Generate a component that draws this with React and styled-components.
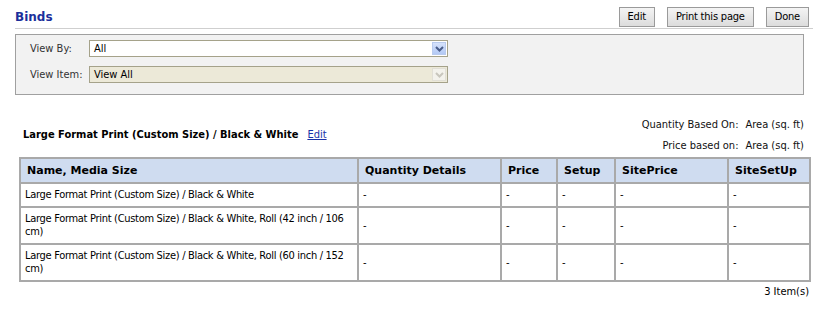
import React from "react";
import styled, { createGlobalStyle } from "styled-components";

const Global = createGlobalStyle`
  body {
    margin: 0;
    background: #fff;
    font-family: Tahoma, "DejaVu Sans Condensed", "DejaVu Sans", sans-serif;
    font-size: 11px;
    color: #000;
  }
`;

const Page = styled.div`
  padding: 6px 15px 0 15px;
  width: 798px;
`;

const TopBar = styled.div`
  display: flex;
  justify-content: space-between;
  align-items: center;
  height: 21px;
  padding-bottom: 1px;
  border-bottom: 1px solid #cfcfcf;
  padding-right: 4px;
`;

const Title = styled.h1`
  margin: 0;
  font-family: Verdana, "DejaVu Sans", sans-serif;
  font-size: 12px;
  font-weight: bold;
  color: #1b2f9b;
`;

const Buttons = styled.div`
  display: flex;
  gap: 12px;
`;

const Button = styled.button`
  height: 20px;
  padding: 0 8px;
  font-family: Tahoma, "DejaVu Sans Condensed", "DejaVu Sans", sans-serif;
  font-size: 11px;
  letter-spacing: -0.2px;
  color: #000;
  border: 1px solid #9a9a9a;
  background: linear-gradient(#f4f4f4, #dcdcdc);
`;

const Filters = styled.div`
  margin-top: 5px;
  width: 789px;
  height: 61px;
  background: #f2f2f2;
  border: 1px solid #a0a0a0;
  padding: 5px 0 0 14px;
  box-sizing: border-box;
  display: flex;
  flex-direction: column;
  gap: 9px;
`;

const FilterRow = styled.div`
  display: flex;
  align-items: center;
`;

const Label = styled.span`
  width: 59px;
  color: #333;
`;

const Select = styled.div`
  width: 359px;
  height: 17px;
  box-sizing: border-box;
  border: 1px solid #a5a28a;
  background: ${(p) => (p.$disabled ? "#ece9d8" : "#fff")};
  display: flex;
  align-items: center;
  justify-content: space-between;
  padding: 0 1px 0 4px;
`;

const Arrow = styled.div`
  width: 14px;
  height: 13px;
  display: flex;
  align-items: center;
  justify-content: center;
  background: ${(p) => (p.$disabled ? "#f3f2ec" : "linear-gradient(#d6e2fb, #b3c9f5)")};
  border: 1px solid ${(p) => (p.$disabled ? "#e1dfd6" : "#b9cbee")};
  box-sizing: border-box;
`;

const Section = styled.div`
  padding: 23px 4px 0 4px;
`;

const InfoRow = styled.div`
  display: flex;
  justify-content: space-between;
  align-items: flex-end;
`;

const SubTitle = styled.div`
  font-weight: bold;
  padding: 0 0 11px 4px;
  display: flex;
  gap: 9px;
`;

const EditLink = styled.a`
  font-weight: normal;
  color: #1a32a8;
  text-decoration: underline;
`;

const Based = styled.div`
  display: grid;
  grid-template-columns: auto auto;
  column-gap: 7px;
  row-gap: 8px;
  padding-right: 5px;
  text-align: right;
  color: #111;
`;

const Table = styled.table`
  margin-top: 5px;
  width: 790px;
  table-layout: fixed;
  border-collapse: collapse;
  border: 2px solid #a9a9a9;
`;

const Th = styled.th`
  background: #cfdcf0;
  font-family: Verdana, "DejaVu Sans", sans-serif;
  font-size: 11px;
  font-weight: bold;
  text-align: left;
  padding: 0 6px;
  height: 23px;
  border: 2px solid #a9a9a9;
`;

const Td = styled.td`
  padding: 4px 0 5px 4px;
  line-height: 13px;
  letter-spacing: -0.3px;
  border: 2px solid #a9a9a9;
  vertical-align: middle;
`;

const Footer = styled.div`
  text-align: right;
  padding: 3px 0 0 0;
  width: 790px;
`;

const Chevron = ({ disabled }) => (
  <svg width="9" height="6" viewBox="0 0 9 6">
    <path d="M1 1 L4.5 4.5 L8 1" fill="none" stroke={disabled ? "#c8c6bd" : "#4a5d8a"} strokeWidth="2" />
  </svg>
);

const columns = [
  ["Name, Media Size", 338],
  ["Quantity Details", 143],
  ["Price", 56],
  ["Setup", 58],
  ["SitePrice", 113],
  ["SiteSetUp", 82],
];

const rows = [
  "Large Format Print (Custom Size) / Black & White",
  "Large Format Print (Custom Size) / Black & White, Roll (42 inch / 106 cm)",
  "Large Format Print (Custom Size) / Black & White, Roll (60 inch / 152 cm)",
];

export default function App() {
  return (
    <Page>
      <Global />
      <TopBar>
        <Title>Binds</Title>
        <Buttons>
          <Button>Edit</Button>
          <Button>Print this page</Button>
          <Button>Done</Button>
        </Buttons>
      </TopBar>
      <Filters>
        <FilterRow>
          <Label>View By:</Label>
          <Select>
            <span>All</span>
            <Arrow><Chevron /></Arrow>
          </Select>
        </FilterRow>
        <FilterRow>
          <Label>View Item:</Label>
          <Select $disabled>
            <span>View All</span>
            <Arrow $disabled><Chevron disabled /></Arrow>
          </Select>
        </FilterRow>
      </Filters>
      <Section>
        <InfoRow>
          <SubTitle>
            Large Format Print (Custom Size) / Black &amp; White
            <EditLink href="#">Edit</EditLink>
          </SubTitle>
          <Based>
            <span>Quantity Based On:</span>
            <span>Area (sq. ft)</span>
            <span>Price based on:</span>
            <span>Area (sq. ft)</span>
          </Based>
        </InfoRow>
        <Table>
          <colgroup>
            {columns.map(([name, w]) => (
              <col key={name} style={{ width: w }} />
            ))}
          </colgroup>
          <thead>
            <tr>
              {columns.map(([name]) => (
                <Th key={name}>{name}</Th>
              ))}
            </tr>
          </thead>
          <tbody>
            {rows.map((r) => (
              <tr key={r}>
                <Td>{r}</Td>
                <Td>-</Td>
                <Td>-</Td>
                <Td>-</Td>
                <Td>-</Td>
                <Td>-</Td>
              </tr>
            ))}
          </tbody>
        </Table>
        <Footer>3 Item(s)</Footer>
      </Section>
    </Page>
  );
}
